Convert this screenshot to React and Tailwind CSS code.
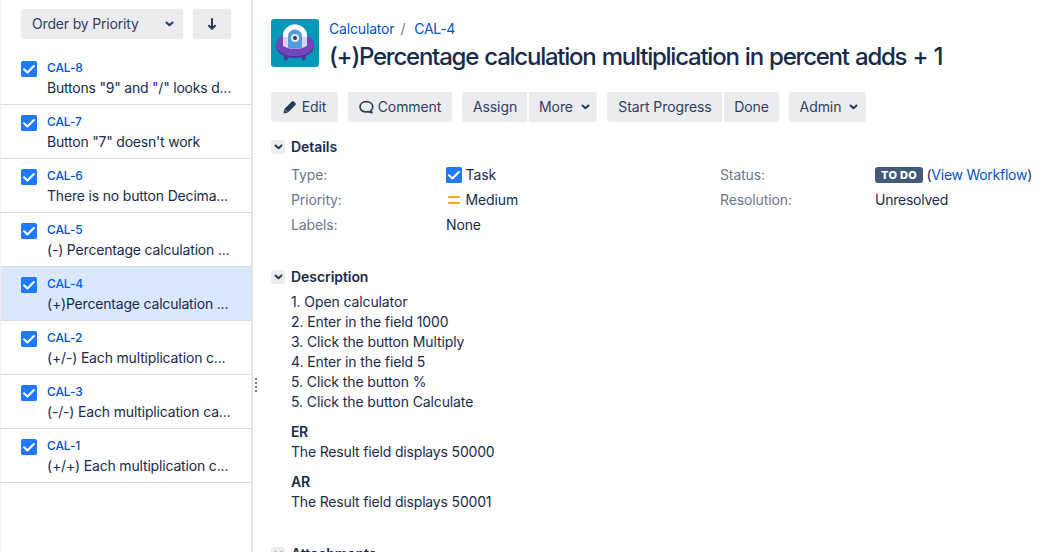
import React from 'react';

const issues = [
  ['CAL-8', 'Buttons "9" and "/" looks d...', 'tracking-[-0.21px]'],
  ['CAL-7', 'Button "7" doesn\'t work', 'tracking-[-0.21px]'],
  ['CAL-6', 'There is no button Decima...', 'tracking-[-0.18px]'],
  ['CAL-5', '(-) Percentage calculation ...', 'tracking-[-0.18px]'],
  ['CAL-4', '(+)Percentage calculation ...', 'tracking-[-0.19px]'],
  ['CAL-2', '(+/-) Each multiplication c...', 'tracking-[-0.17px]'],
  ['CAL-3', '(-/-) Each multiplication ca...', 'tracking-[-0.17px]'],
  ['CAL-1', '(+/+) Each multiplication c...', 'tracking-[-0.17px]'],
];

function TaskIcon() {
  return (
    <svg className="h-4 w-4 shrink-0" viewBox="0 0 16 16" fill="none">
      <rect width="16" height="16" rx="1.6" fill="#2179FC" />
      <path d="M3.1 8.3 6.4 11.4 12.9 5" stroke="#fff" strokeWidth="2.1" strokeLinecap="round" strokeLinejoin="round" />
    </svg>
  );
}

function Chevron() {
  return (
    <svg className="h-[6px] w-[9px] shrink-0" viewBox="0 0 9 6" fill="none">
      <path d="M1.5 1.5 4.5 4.2 7.5 1.5" stroke="#253858" strokeWidth="2" strokeLinecap="round" strokeLinejoin="round" />
    </svg>
  );
}

function Avatar() {
  return (
    <svg className="h-12 w-12 shrink-0" viewBox="0 0 48 48">
      <rect width="48" height="48" rx="3" fill="#0098B7" />
      <path d="M13 35h3.600v6.200H13zM31 35h3.600v6.200H31z" fill="#50369A" />
      <ellipse cx="24" cy="27" rx="19" ry="12" fill="#50369A" />
      <ellipse cx="24" cy="25.500" rx="19" ry="11.500" fill="#7445B8" />
      <path d="M12 17.500a12 12 0 0 1 24 0v9c-4.500 4.500-19.500 4.500-24 0z" fill="#DAD2F0" />
      <path d="M12 17a12 11.500 0 0 1 24 0v1H12z" fill="#fff" />
      <path d="M17 17.500a7 7 0 0 1 14 0v11c-4 1.500-10 1.500-14 0z" fill="#559AD8" />
      <circle cx="24" cy="19" r="4.100" fill="#DCEBFA" />
      <circle cx="24" cy="19" r="2" fill="#39346C" />
    </svg>
  );
}

function Button({ children, className }) {
  return (
    <button className={`flex h-[30px] shrink-0 items-center justify-center bg-[#ebecf0] text-[14px] tracking-[-0.08px] text-[#2f4060] ${className}`}>
      {children}
    </button>
  );
}

function SectionTitle({ children }) {
  return (
    <div className="flex h-5 items-center gap-[6px]">
      <span className="flex h-[14px] w-[14px] items-center justify-center rounded-[3px] bg-[#ebecf0]">
        <Chevron />
      </span>
      <h2 className="text-[14px] leading-5 font-semibold tracking-[-0.06px]">{children}</h2>
    </div>
  );
}

export default function App() {
  return (
    <div className="flex h-[552px] w-[1044px] overflow-hidden bg-white font-[Inter,sans-serif] text-[14px] leading-5 text-[#172b4d]">
      <aside className="flex w-[253px] shrink-0 flex-col border-r-2 border-l border-r-[#e4e5ec] border-l-[#f1f1f5]">
        <div className="flex gap-[10px] pt-[9px] pl-5">
          <Button className="w-[162px] rounded-[3px] pl-[2px]">
            <span className="w-[133px] text-left tracking-[-0.17px]">Order by Priority</span>
            <Chevron />
          </Button>
          <Button className="w-[38px] rounded-[3px]">
            <svg className="h-3 w-[10px]" viewBox="0 0 10 12" fill="none" stroke="#253858" strokeWidth="2" strokeLinecap="round" strokeLinejoin="round">
              <path d="M5 1v9.500M2 7.700l3 3 3-3" />
            </svg>
          </Button>
        </div>
        <ul className="pt-3">
          {issues.map(([key, summary, tracking]) => (
            <li
              key={key}
              className={`flex h-[54px] gap-[10px] border-b border-[#d9dbe3] pt-[10px] pl-5 ${key === 'CAL-4' ? 'bg-[#d9e7ff]' : ''}`}
            >
              <TaskIcon />
              <div className="whitespace-nowrap">
                <div className={`text-[12px] leading-[14px] font-medium tracking-[-0.1px] ${key === 'CAL-4' ? 'text-[#0060f0]' : 'text-[#0052cc]'}`}>{key}</div>
                <div className={`mt-[3px] leading-5 ${tracking}`}>{summary}</div>
              </div>
            </li>
          ))}
        </ul>
      </aside>
      <div className="flex w-[6px] shrink-0 flex-col items-center gap-[2px] pt-[378px]">
        {[0, 1, 2, 3].map((n) => (
          <span key={n} className="h-[2px] w-[2px] bg-[#6b7489]" />
        ))}
      </div>
      <main className="min-w-0 flex-1 pl-3">
        <header className="flex h-[92px] gap-[10px] pt-[19px] whitespace-nowrap">
          <Avatar />
          <div>
            <div className="flex leading-5 tracking-[-0.17px] text-[#0052cc]">
              <span>Calculator</span>
              <span className="ml-[6px] text-[#6b778c]">/</span>
              <span className="ml-[9px] tracking-[-0.3px]">CAL-4</span>
            </div>
            <h1 className="mt-1 text-[24px] leading-7 font-medium tracking-[-1.24px] [word-spacing:1.1px]">(+)Percentage calculation multiplication in percent adds + 1</h1>
          </div>
        </header>
        <div className="flex gap-[10px]">
          <Button className="w-[67px] gap-[5px] rounded-[3px]">
            <svg className="h-[14px] w-[14px]" viewBox="0 0 14 14" fill="#253858">
              <path d="M.5 13.500 1.400 9.100 8.900 1.600a1.400 1.400 0 0 1 2 0l1.500 1.500a1.400 1.400 0 0 1 0 2L4.900 12.600z" />
              <path d="m1.700 9.300 3 3" stroke="#ebecf0" strokeWidth=".6" />
            </svg>
            <span>Edit</span>
          </Button>
          <Button className="w-[104px] gap-1 rounded-[3px]">
            <svg className="h-[14px] w-[15px]" viewBox="0 0 15 14" fill="none" stroke="#2f4060" strokeWidth="1.700" strokeLinejoin="round">
              <path d="M9 11.600c-4.500 1.100-8-1.200-8-4.800 0-3 2.800-5.100 6.400-5.100s6.400 2.100 6.400 5.100c0 1.700-.8 3-2.100 3.900l1.300 1.900z" />
            </svg>
            <span>Comment</span>
          </Button>
          <div className="flex gap-[2px]">
            <Button className="w-[65px] rounded-l-[3px] pl-px">Assign</Button>
            <Button className="w-[68px] gap-2 rounded-r-[3px] pl-[3px]">More<Chevron /></Button>
          </div>
          <div className="flex gap-[2px]">
            <Button className="w-[115px] rounded-l-[3px] pl-px">Start Progress</Button>
            <Button className="w-[55px] rounded-r-[3px]">Done</Button>
          </div>
          <Button className="w-[77px] gap-2 rounded-[3px] pl-[3px]">Admin<Chevron /></Button>
        </div>
        <section className="mt-[15px]">
          <SectionTitle>Details</SectionTitle>
          <div className="mt-[8px] flex pl-5 tracking-[-0.12px] whitespace-nowrap">
            <dl className="grid w-[429px] shrink-0 grid-cols-[155px_1fr] gap-y-[5px]">
              <dt className="text-[#6b778c]">Type:</dt>
              <dd className="flex items-center gap-[3.5px]"><TaskIcon />Task</dd>
              <dt className="text-[#6b778c]">Priority:</dt>
              <dd className="flex items-center gap-[3.5px]">
                <svg className="h-4 w-4" viewBox="0 0 16 16"><path d="M3 5h10M3 11h10" stroke="#ffa60d" strokeWidth="2" strokeLinecap="round" /></svg>
                Medium
              </dd>
              <dt className="text-[#6b778c]">Labels:</dt>
              <dd>None</dd>
            </dl>
            <dl className="grid w-[324px] shrink-0 grid-cols-[155px_1fr] content-start gap-y-[5px]">
              <dt className="text-[#6b778c]">Status:</dt>
              <dd className="flex items-center gap-[3.5px]">
                <span className="flex h-4 w-12 shrink-0 items-center justify-center rounded-[3px] bg-[#42597a] text-[11px] leading-4 font-extrabold tracking-[0.3px] text-white">TO DO</span>
                <span className="tracking-[-0.26px]">(<a className="text-[#0052cc]">View Workflow</a>)</span>
              </dd>
              <dt className="text-[#6b778c]">Resolution:</dt>
              <dd className="tracking-[-0.25px]">Unresolved</dd>
            </dl>
          </div>
        </section>
        <section className="mt-8">
          <SectionTitle>Description</SectionTitle>
          <div className="mt-[5px] pl-5 tracking-[-0.11px]">
            <p>1. Open calculator</p>
            <p>2. Enter in the field 1000</p>
            <p>3. Click the button Multiply</p>
            <p>4. Enter in the field 5</p>
            <p>5. Click the button %</p>
            <p>5. Click the button Calculate</p>
            <p className="mt-[10px] font-semibold tracking-[-0.4px]">ER</p>
            <p className="tracking-[-0.17px]">The Result field displays 50000</p>
            <p className="mt-[10px] font-semibold">AR</p>
            <p className="tracking-[-0.17px]">The Result field displays 50001</p>
          </div>
        </section>
        <section className="mt-8">
          <SectionTitle>Attachments</SectionTitle>
        </section>
      </main>
    </div>
  );
}
